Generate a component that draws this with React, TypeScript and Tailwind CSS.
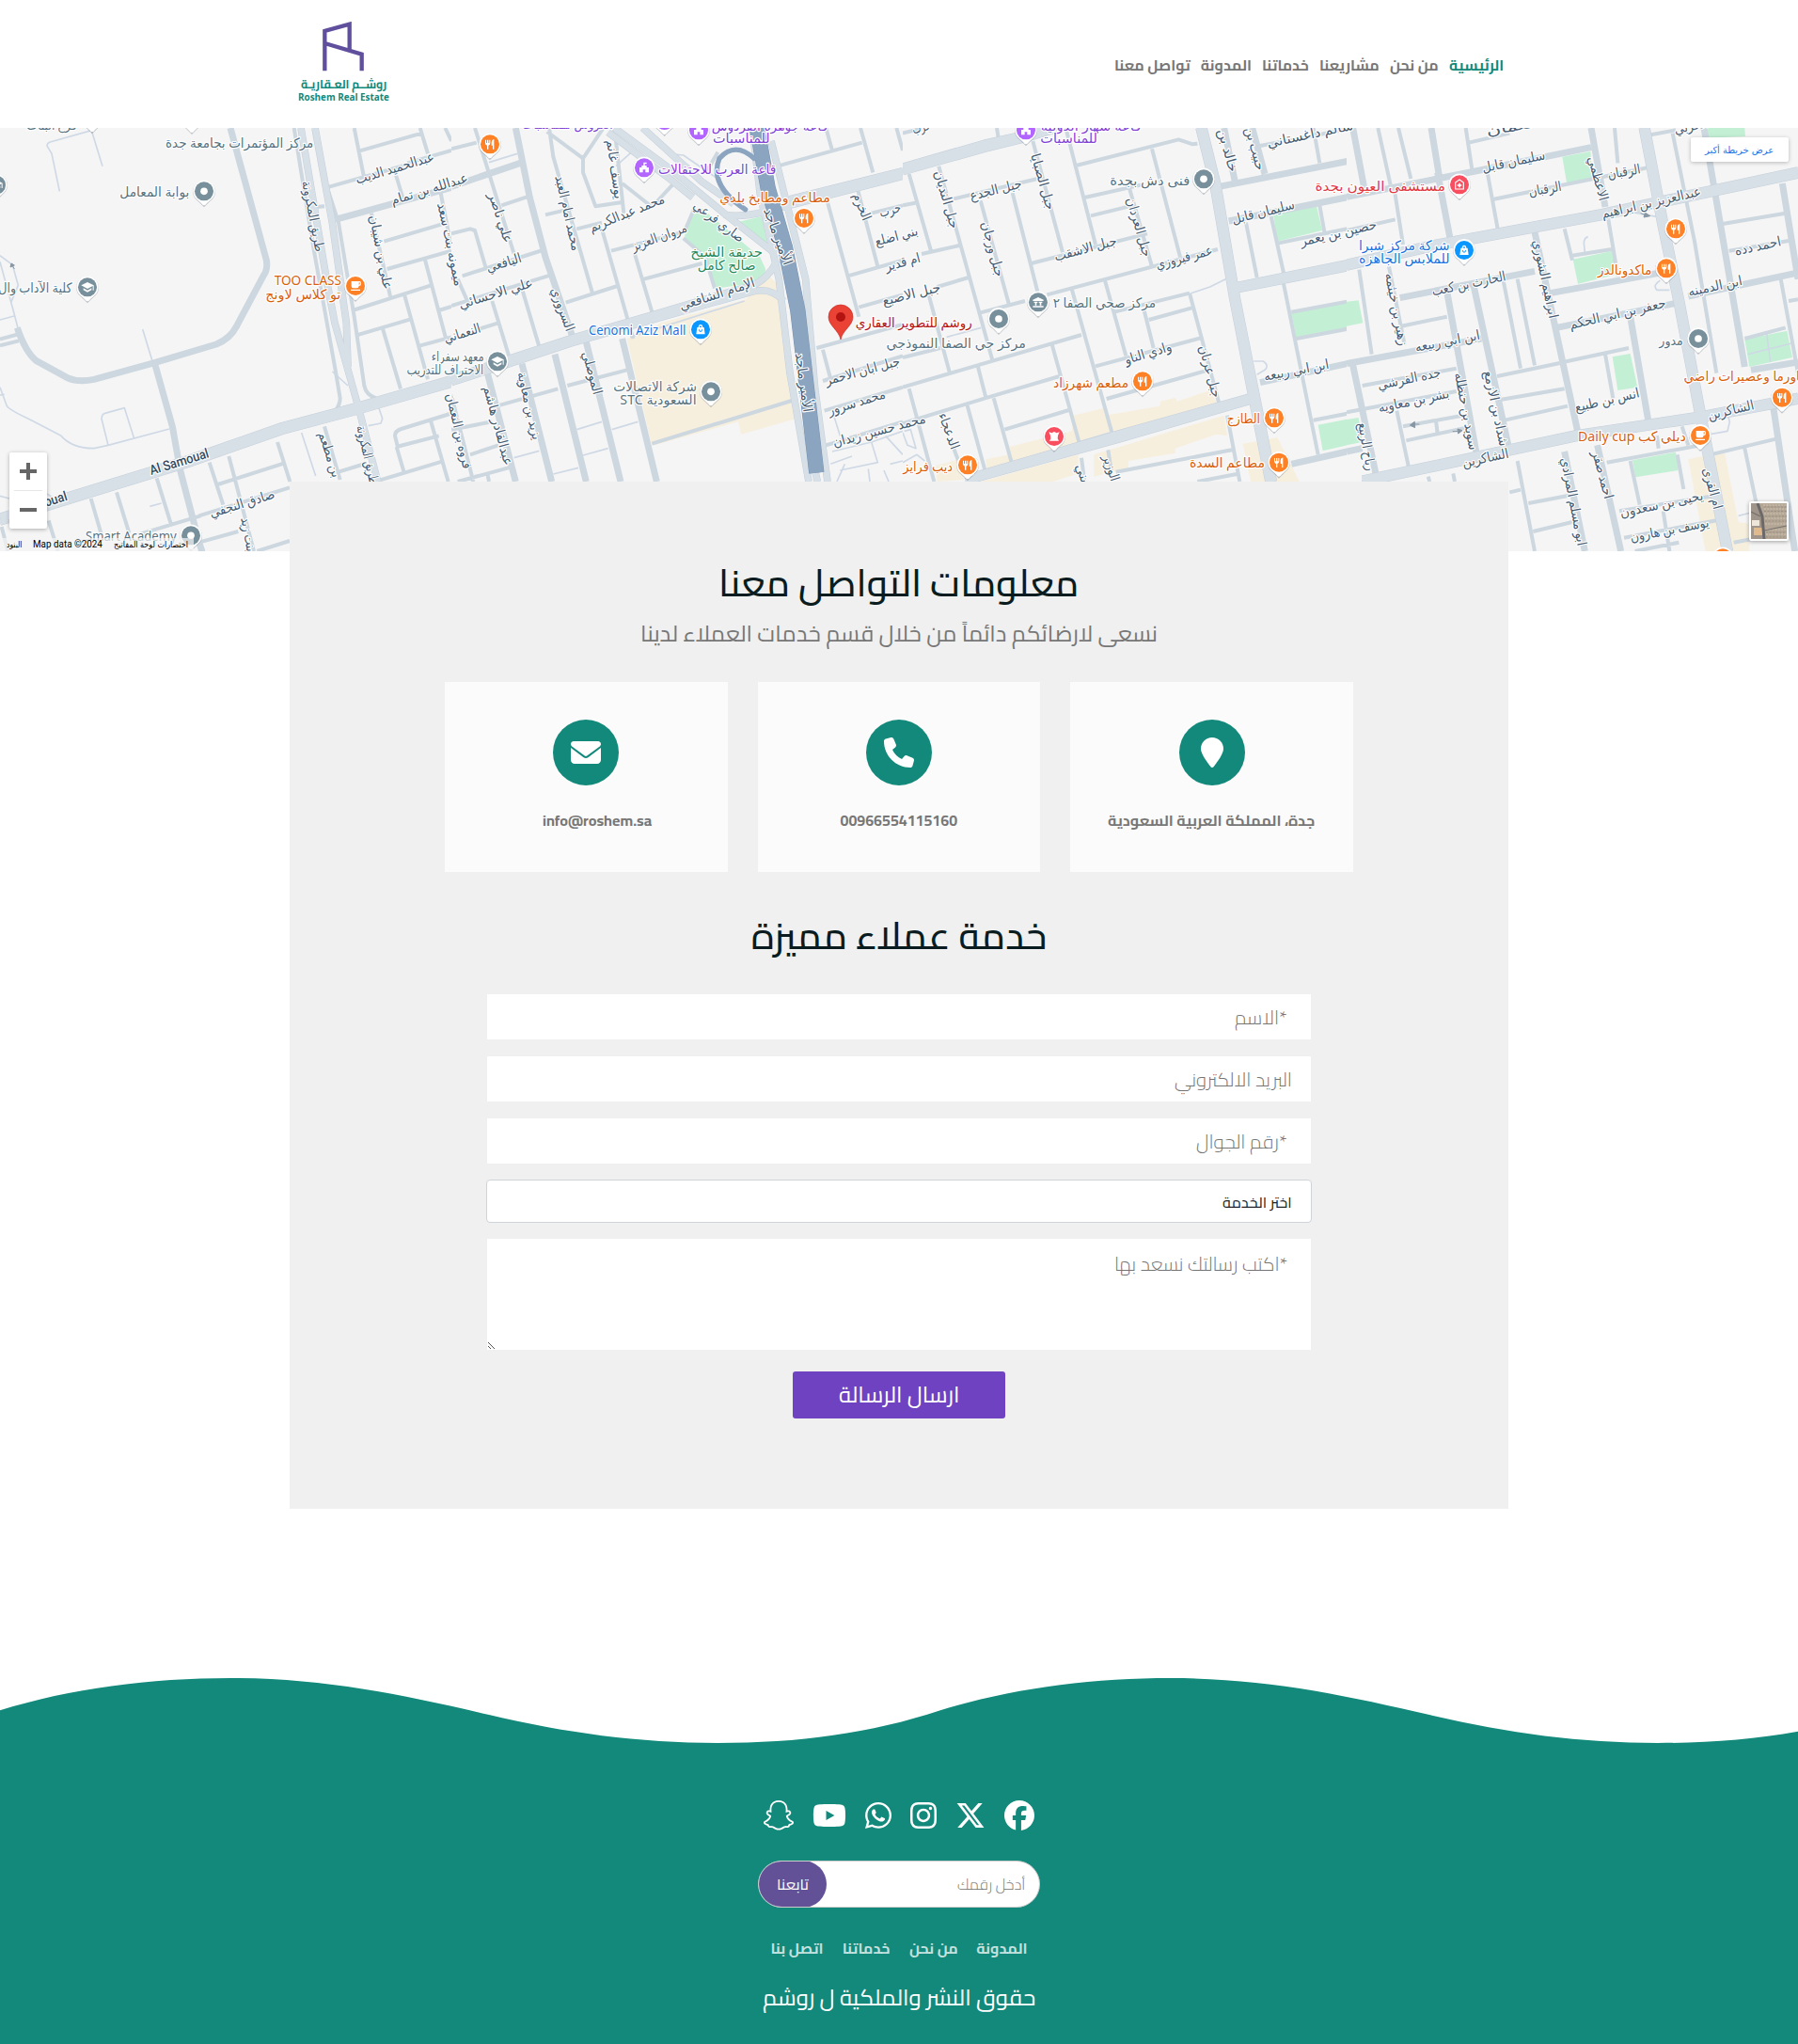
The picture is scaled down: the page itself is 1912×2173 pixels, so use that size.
import { useLayoutEffect, useRef, useState } from "react";
import type { ReactNode } from "react";
import {
  FaEnvelope,
  FaFacebook,
  FaInstagram,
  FaLocationPin,
  FaPhone,
  FaWhatsapp,
  FaXTwitter,
  FaYoutube,
} from "react-icons/fa6";
import { BsSnapchat } from "react-icons/bs";

/* Text that is condensed or widened to fill the width of its box. */
function Fit({ children, className = "", ltr = false }: { children: ReactNode; className?: string; ltr?: boolean }) {
  const box = useRef<HTMLSpanElement>(null);
  const inner = useRef<HTMLSpanElement>(null);
  const [scale, setScale] = useState(1);
  useLayoutEffect(() => {
    if (box.current && inner.current) setScale(box.current.clientWidth / inner.current.offsetWidth);
  }, [children]);
  return (
    <span ref={box} dir={ltr ? "ltr" : "rtl"} className={`flex shrink-0 ${className}`}>
      <span
        ref={inner}
        className={`block shrink-0 whitespace-nowrap ${ltr ? "origin-left" : "origin-right"}`}
        style={{ transform: `scaleX(${scale})` }}
      >
        {children}
      </span>
    </span>
  );
}

/* ---------- Map data: each sheet is drawn at three units per pixel ---------- */
type Label = [text: string, cx: number, cy: number, angle: number, length: number, kind?: string];
type Sheet = {
  x: number;
  beige: string;
  green: string;
  thin: string;
  minor: string;
  medium: string;
  major: string;
  highway?: string;
  ramp?: string;
  arrows?: string;
  labels: Label[];
  pins: [x: number, y: number, kind: string][];
};

const sheets: Sheet[] = [
  {
    x: 0,
    beige: "",
    green: "",
    thin: "M190 220L165 100L150 75Q150 66 160 63L292 26L327 140M0 425L40 455L58 520L35 575M0 445L45 610L58 660M0 630L45 618M455 660L487 765M0 845L22 905Q30 918 100 950L195 1000Q230 1040 300 1040L345 1030L540 978M345 1030L324 945Q325 930 335 928L397 911L427 1006M0 870L14 868M962 990L1007 1128M478 1225L515 1215M1175 968L1215 960L1220 945L1205 900M0 1192L30 1200M150 1185L180 1205M1060 795L1110 840",
    minor:
      "M0 692L55 677M0 712L60 697M938 18L1000 400L1070 790L1085 880Q1085 900 1070 920M1025 150L1080 320L1130 620L1162 840Q1168 870 1200 880M1050 206L1300 135M1130 18L1160 170M1145 92L1345 35M1340 18L1365 100M1420 18L1440 60M1300 130L1440 90M1262 165L1285 240M1185 290L1245 555M1225 380L1410 325M1235 468L1440 410M1125 600L1375 520M1135 680L1310 628M1400 600L1440 588M1355 435L1425 700M1290 550L1365 820M1220 655L1278 850M1330 715L1440 685M1405 220L1440 400M1270 1040L1260 1000Q1260 984 1280 978L1435 930M1265 1035L1400 1000M1265 1035L1290 1120M1200 1145L1410 1082M1375 955L1430 1146M1035 970L1085 1140M1080 1115L1155 1092M1010 270L1035 268M885 1020L925 1146M730 1065L810 1368M668 1085L712 1220M695 1155L905 1088M635 1255L924 1165M500 1135L545 1280M372 1180L412 1310M290 1200L325 1320M155 1270L185 1368M440 1315L640 1255M635 1340L760 1305M820 1368L924 1335M5 1290L25 1368",
    medium:
      "M735 18L850 440Q855 470 840 490L755 650Q735 690 690 708L493 767L300 820Q250 830 215 815L115 760Q80 730 55 655M493 767L550 970L575 1110L635 1340L645 1370M1070 310L1440 208",
    major:
      "M960 18L1045 520L1068 640L1110 790L1145 915L1205 1146M1005 18L1060 320L1105 640L1110 780M0 1275L300 1182L600 1090L900 985L1145 920L1440 835M0 1258L300 1165L600 1073L900 968L1145 903L1440 818",
    arrows: "M46 468L40 458M33 462L36 450L46 456Z",
    labels: [
      ["مركز المؤتمرات بجامعة جدة", 764, 68, 0, 472, "poi"],
      ["فرع البنات", 165, 12, 0, 160, "poi"],
      ["بوابة المعامل", 493, 225, 0, 222, "poi"],
      ["كلية الآداب وال", 112, 530, 0, 235, "poi"],
      ["TOO CLASS", 982, 507, 0, 214, "food"],
      ["تو كلاس لاونج", 967, 552, 0, 240, "food"],
      ["طريق المكرونة", 997, 300, 79, 230],
      ["عبدالحميد الديب", 1260, 148, -17, 260],
      ["عبدالله بن تمام", 1370, 215, -17, 255],
      ["علي بن شيبان", 1213, 415, 79, 240],
      ["طريق المكرونة", 1170, 1060, 77, 190],
      ["بن مطعم", 1050, 1060, 72, 150],
      ["Al Samoual", 572, 1085, -17, 195, "street"],
      ["Al Samoual", 120, 1222, -17, 195, "street"],
      ["صادق النجفي", 773, 1218, -17, 215],
      ["بنت زيد", 790, 1315, 80, 110],
      ["Smart Academy", 418, 1322, 0, 290, "poi"],
    ],
    pins: [
      [294, -14, "dot"],
      [612, -12, "dot"],
      [651, 220, "dot"],
      [-12, 200, "school"],
      [279, 526, "school"],
      [1134, 522, "cup"],
      [609, 1318, "dot"],
    ],
  },
  {
    x: 480,
    beige: "M560 690L670 640L940 565L1012 490L1045 520L1100 945L925 995L915 955L640 1032Z",
    green: "M745 345L770 280L800 275L985 430L1003 470L985 510L845 530L815 440L745 370ZM905 320L990 300L1012 405Z",
    thin: "M400 980L480 955M512 980L595 955M410 1065L500 1040M325 1122L405 1102M200 1070L280 1048M570 685L935 570M1220 935L1240 1000M1215 1050L1340 1020L1360 1085L1240 1110M1210 1090L1278 1065M1255 1090L1230 1146M1330 1105L1335 1146M1385 1000L1440 1060M1340 1020L1440 985M1380 1110L1395 1146M1400 1090L1440 1080M690 100L740 105L850 180M120 128L210 100M525 140L575 95",
    minor:
      "M300 295L385 275M312 18L325 110L450 545M305 30L420 115L485 18M420 115L420 160L460 268L545 255M525 60L550 290M545 195L640 270L705 200M400 340L480 320M480 340L580 690M510 410L740 350M585 420L640 605M615 500L800 450M365 575L530 522M740 370L810 430L840 530M775 275L745 345M75 18L200 420M0 85L80 65M160 265L250 235M0 355L60 340L75 345L110 465M35 490L300 405M0 585L325 485M225 530L280 715M85 660L150 640M20 500L60 590M130 570L185 750M0 980L130 955M145 905L340 850M370 840L560 790M60 1060L150 1030M20 1146L190 1100M0 870L70 1146M640 1025L1095 885M1165 720L1440 645M1185 725L1210 820M1185 825L1440 745M1190 920L1440 845M1195 1030L1440 955M1200 255L1300 620M1265 490L1440 440M1300 590L1440 550M1295 210L1360 460M1040 140L1310 65M1195 18L1215 90M1305 18L1345 160M1420 18L1440 90M1340 290L1440 265M850 95L810 165M115 1120L120 1146",
    medium:
      "M0 205L220 130M205 18L250 240L300 430L390 695M225 770L320 1146M330 740L430 1146M430 700L540 1146M545 690L655 1146M115 800L205 1146",
    major:
      "M0 830L190 768L380 705L640 630L960 540Q1020 525 1060 570M0 815L190 752L380 690L640 615L960 520Q1010 500 1040 440M520 18L700 150L870 290L1035 420M500 32L690 175L770 240M610 18L800 190L900 260M870 295Q920 305 1000 285L1440 172M1080 245L1440 155M960 18L985 230L1045 500L1080 800L1140 1146M1020 60L1070 260L1130 500L1160 850L1200 1146M1160 1110L1168 1146",
    highway: "M975 18L1010 210L1065 400L1105 600L1165 1118",
    ramp: "M965 115Q905 60 855 115Q820 200 938 278",
    labels: [
      ["قاعة جوهرة الفردوس", 1015, 14, 0, 370, "hall"],
      ["للمناسبات", 925, 55, 0, 182, "hall"],
      ["قاعة العرب للاحتفالات", 848, 152, 0, 376, "hall"],
      ["العروس للمناسبات", 370, 8, 0, 290, "hall"],
      ["مطاعم ومطابخ بلدي", 1032, 242, 0, 352, "food"],
      ["صاري فرعي", 852, 318, 37, 190],
      ["حديقة الشيخ", 878, 416, 0, 230, "park"],
      ["صالح كامل", 878, 458, 0, 185, "park"],
      ["الأمير ماجد", 1040, 365, 70, 190],
      ["الأمير ماجد", 1122, 830, 82, 190],
      ["يوسف غانم", 520, 150, 82, 190],
      ["محمد امام العبد", 370, 290, 77, 245],
      ["محمد عبدالكريم", 560, 292, -22, 255],
      ["مروان العزيز", 663, 368, -20, 185],
      ["علي ناصر", 155, 305, 72, 165],
      ["اليافعي", 168, 450, -17, 115],
      ["علي الاحسائي", 142, 548, -17, 245],
      ["ميمونه بنت سعد", -5, 390, 78, 270],
      ["السروري", 353, 597, 70, 145],
      ["الإمام الشافعي", 848, 550, -18, 250],
      ["Cenomi Aziz Mall", 593, 667, 0, 310, "shop"],
      ["النعماني", 35, 675, -17, 120],
      ["معهد سفراء", 20, 750, 0, 168, "poi"],
      ["الاحتراف للتدريب", -20, 792, 0, 245, "poi"],
      ["شركة الاتصالات", 650, 845, 0, 266, "poi"],
      ["السعودية STC", 660, 887, 0, 244, "poi"],
      ["الموصلي", 447, 800, 75, 140],
      ["يزيد بن معاوية", 247, 905, 77, 220],
      ["عبدالقادر هاشم", 147, 968, 75, 260],
      ["فروه بن النعمان", 22, 985, 77, 245],
      ["الخرم", 1308, 270, 68, 90],
      ["حرب", 1400, 282, -15, 70],
      ["بني اضلع", 1420, 365, -15, 140],
      ["ام قدير", 1440, 448, -15, 115],
      ["روشم للتطوير العقاري", 1475, 641, 0, 372, "red"],
      ["جبل ابان الاحمر", 1312, 795, -15, 245],
      ["محمد سرور", 1293, 895, -17, 190],
      ["محمد حسين زيدان", 1365, 985, -15, 305],
    ],
    pins: [
      [123, 70, "food"],
      [680, -6, "hall"],
      [789, 25, "hall"],
      [615, 145, "hall"],
      [1125, 306, "food"],
      [795, 661, "shop"],
      [147, 763, "school"],
      [828, 859, "dot"],
    ],
  },
  {
    x: 960,
    beige:
      "M340 1035L540 985L545 935L640 912L645 935L820 905L822 890L870 878L875 890L980 855L1005 900L350 1095ZM610 1060L1025 935L1035 1000L1000 995L870 1040L870 1055L720 1080L720 1105L670 1115L610 1130ZM105 1095L180 1075L195 1140L110 1146ZM265 1075L340 1060L345 1095L270 1115ZM250 1146L560 1060L560 1120L480 1146ZM1085 1025L1195 1005L1265 1146L1110 1146Z",
    green: "M1182 293L1320 267L1338 345L1195 380ZM1240 610L1440 570L1440 650L1255 685ZM1325 965L1440 943L1440 1025L1340 1048Z",
    thin: "M920 545L980 525L1030 500M1120 762L1150 762Q1170 775 1155 790L1130 805M560 1020L660 990M140 685L250 655M5 985L25 980L42 1040L15 1030L0 990M0 1085L45 1060L70 1080",
    minor:
      "M115 140L285 755M20 165L90 410M0 265L40 257M60 420L180 393M110 525L210 495M160 245L430 180M415 60L510 415M300 18L305 50M520 18L615 390M553 138L880 55L925 70L940 68M580 240L760 200M600 298L735 265M410 450L780 355M720 200L795 460M795 85L885 430M350 225L430 540M248 250L340 585M245 608L390 570M460 550L1005 405M0 845L570 678M0 750L120 720M80 540L150 800M615 778L950 688M540 535L670 1000M645 505L712 745M770 600L800 720M675 605L915 545M785 630L930 590M915 545L1010 900M650 882L965 793M475 705L565 1030M240 780L265 878M290 880L350 1095M0 960L270 878L500 810M325 980L530 918M20 850L100 1146M205 900L265 1120M155 1020L185 1100M655 1045L665 1110M570 1070L580 1146M680 1115L1050 1045M1035 935L1075 1146M940 1146L1065 1122M1215 515L1325 1060M1240 605L1440 568M1255 690L1440 655M1310 950L1440 925M1140 75L1440 18M1310 18L1330 130M1175 300L1215 480M1330 265L1345 350M1200 385L1440 335M1095 320L1130 495M0 35L60 20",
    medium: "M1010 205L1430 122M1115 18L1155 165M1025 18L1060 190M1040 315L1440 235M1140 830L1440 765M1240 1090L1440 1045",
    major:
      "M0 158L260 85L400 50L490 22M0 142L260 67L400 36L440 22M945 18L990 200L1052 560L1112 870L1167 1146M960 18L1005 200L1066 560L1128 870L1183 1146M200 1146L700 1008L1120 885M230 1126L700 990L1120 872M1060 535L1440 460M1060 522L1440 445",
    labels: [
      ["قاعة شهار الدولية", 600, 14, 0, 320, "hall"],
      ["للمناسبات", 530, 55, 0, 182, "hall"],
      ["حرب", 60, 18, -15, 60],
      ["جبل النديان", 138, 247, 74, 190],
      ["جبل الجدع", 297, 217, -14, 170],
      ["جبل الصبايا", 445, 190, 74, 185],
      ["جبل ورجان", 285, 405, 75, 180],
      ["جبل الاشقب", 583, 405, -15, 205],
      ["جبل العردان", 752, 335, 74, 195],
      ["فنى دش بجدة", 788, 188, 0, 255, "poi"],
      ["عمر فيروزي", 898, 433, -15, 185],
      ["جبل الاصبع", 28, 550, -14, 190],
      ["مركز صحي الصفا ٢", 643, 580, 0, 328, "poi"],
      ["مركز حي الصفا النموذجي", 170, 708, 0, 445, "poi"],
      ["وادي الناو", 783, 738, -17, 155],
      ["جبل عرنان", 978, 795, 75, 170],
      ["مطعم شهرزاد", 600, 833, 0, 240, "food"],
      ["الدعجاء", 145, 985, 70, 120],
      ["ديب فرايز", 80, 1100, 0, 158, "food"],
      ["الوزير", 663, 1103, 72, 85],
      ["بني", 572, 1120, 70, 60],
      ["خالد بن", 1035, 90, 75, 140],
      ["حبيب بن", 1122, 85, 75, 140],
      ["سالم داغستاني", 1300, 40, -12, 280],
      ["سليمان قابل", 1150, 288, -14, 205],
      ["حصين بن يعمر", 1390, 355, -13, 250],
      ["ابن ابي ربيعه", 1256, 793, -11, 210],
      ["الطازج", 1087, 948, 0, 106, "food"],
      ["مطاعم السدة", 1035, 1090, 0, 240, "food"],
    ],
    pins: [
      [393, 25, "hall"],
      [960, 181, "dot"],
      [432, 574, "museum"],
      [306, 627, "dot"],
      [765, 826, "food"],
      [483, 1002, "star"],
      [207, 1093, "food"],
      [1185, 943, "food"],
      [1200, 1085, "food"],
    ],
  },
  {
    x: 1432,
    beige: "M1090 1075L1205 1050L1250 1275L1285 1280L1285 1368L1145 1368Z",
    green:
      "M688 110L778 93L785 180L702 193ZM722 437L848 410L860 485L738 515ZM0 572L38 568L52 640L0 650ZM848 748L905 738L928 845L865 855ZM1270 692L1405 665L1422 750L1285 780ZM912 1078L1050 1052L1058 1110L922 1132ZM0 948L38 942L50 1020L0 1030ZM1130 18L1270 18L1272 45L1140 50Z",
    thin: "M760 415L757 385Q758 368 770 365M1000 505Q975 520 990 535L1030 535M1160 995L1215 985L1222 955L1215 930M1280 740L1420 705M1340 675L1352 765M1250 1255L1290 1245M900 285L1010 305",
    minor:
      "M100 18L140 200M165 18L205 180M380 18L400 150M390 65L520 35M450 165L482 340M470 245L700 198L960 145M855 18L865 130M0 345L155 310M150 200L180 390M695 340L720 440M720 425L845 405M835 310L865 490M690 765L900 720M825 740L850 880M135 460L185 710M500 505L555 785M545 500L600 775M480 810L680 768M490 885L695 850M505 950L705 905M175 650L320 620M50 840L350 785M0 925L350 858M160 920L200 1110M180 970L370 935M190 1015L400 970M285 952L290 992M40 470L80 740M1040 35L1110 380L1180 800M1195 325L1400 290M1220 410L1410 378M1385 500L1440 800M1270 690L1400 655M1410 570L1440 565M1160 1060L1370 1010M1270 1040L1310 1230M830 1085L1130 1030M545 1080L600 1368M520 1180L555 1172M580 1215L710 1190M595 1305L720 1275M905 1080L935 1220M1055 1060L1075 1170M870 1240L1180 1190M885 1325L1180 1270M1010 1240L1030 1368M920 1368L1060 1340M1235 1340L1290 1330M990 1000L995 1040M1070 970L1090 1030M970 40L1050 25M260 1130L265 1146M340 1120L345 1146",
    medium:
      "M20 18L60 230M290 160L330 370M270 18L295 170M0 238L440 150L780 80M780 18L825 270M600 350L740 1000M650 545L1000 480M670 655L1060 575M170 560L600 475M905 620L962 950M320 540L415 1060M405 520L520 1050M0 770L430 690M20 775L95 1130M0 1050L50 1040M1140 18L1270 780M1390 195L1440 500M1090 555L1440 480M1290 790L1440 765M1360 900L1430 1368M800 1030L875 1368M695 1050L760 1368",
    major:
      "M0 462L270 402L810 302L1440 168M0 448L270 388L810 288L1440 153M943 18L1003 330L1053 570L1123 940L1208 1368M957 18L1017 330L1067 570L1137 940L1222 1368M50 1152L520 1052L730 1007L1130 947L1440 888M50 1138L520 1038L730 993L1130 933L1440 874",
    arrows: "M232 963H216M217 955L202 966L218 974ZM338 986H354M354 978L369 983L356 993ZM938 290L954 296M952 288L968 299L948 303Z",
    labels: [
      ["مستشفى العيون بجدة", 107, 207, 0, 415, "med"],
      ["نعمان", 520, 18, -10, 150],
      ["سليمان قابل", 533, 127, -12, 205],
      ["الرقبان", 633, 215, -10, 105],
      ["الرقبان", 885, 160, -10, 105],
      ["الاعظمي", 800, 180, 75, 145],
      ["عبدالعزيز بن ابراهيم", 972, 258, -13, 325],
      ["شركة مركز شبرا", 184, 396, 0, 290, "shop"],
      ["للملابس الجاهزه", 184, 438, 0, 290, "shop"],
      ["الحارث بن كعب", 390, 517, -12, 240],
      ["زهير بن خيثمه", 157, 597, 79, 235],
      ["ابراهيم الشوري", 632, 500, 78, 255],
      ["ماكدونالدز", 887, 473, 0, 172, "food"],
      ["احمد دده", 1312, 397, -12, 150],
      ["ابن الدمينه", 1176, 525, -12, 175],
      ["جعفر بن ابي الحكم", 865, 613, -13, 315],
      ["ابن ابي ربيعه", 322, 700, -11, 210],
      ["مدور", 1035, 700, 0, 76, "poi"],
      ["جده القرشي", 200, 820, -12, 205],
      ["بشر بن معاويه", 214, 890, -12, 230],
      ["سويد بن حنظله", 380, 922, 79, 250],
      ["شداد بن الازمع", 475, 913, 78, 245],
      ["شاورما وعصيرات راضي", 1278, 812, 0, 405, "food"],
      ["انس بن طبيع", 831, 888, -13, 210],
      ["الشاكرين", 1226, 920, -13, 150],
      ["الشاكرين", 443, 1073, -12, 150],
      ["رباح الربيع", 62, 1035, 80, 155],
      ["ديلي كب Daily cup", 910, 1006, 0, 344, "food"],
      ["احمد صقر", 815, 1125, 75, 155],
      ["ابو مسلم المرادي", 722, 1210, 79, 285],
      ["ام القرى", 1165, 1168, 75, 135],
      ["يحيى بن سعدون", 1005, 1220, -12, 270],
      ["يوسف بن هارون", 1030, 1302, -11, 255],
      ["الحربي", 1100, 14, -12, 110],
    ],
    pins: [
      [360, 199, "med"],
      [375, 408, "shop"],
      [1050, 340, "food"],
      [1020, 466, "food"],
      [1122, 690, "dot"],
      [1389, 878, "food"],
      [1128, 999, "cup"],
      [1200, 1390, "food"],
    ],
  },
];

const labelFill: Record<string, string> = {
  road: "fill-[#475d74]",
  street: "fill-[#34495e]",
  poi: "fill-[#577382]",
  food: "fill-[#d95f0b]",
  hall: "fill-[#8142d6]",
  park: "fill-[#26895a]",
  shop: "fill-[#1a73e0]",
  med: "fill-[#e23744]",
  red: "fill-[#b51416]",
};

const pinFill: Record<string, string> = {
  dot: "fill-[#78909c]",
  school: "fill-[#78909c]",
  museum: "fill-[#78909c]",
  food: "fill-[#ff8126]",
  cup: "fill-[#ff8126]",
  hall: "fill-[#b266ff]",
  shop: "fill-[#0a97ff]",
  med: "fill-[#f84e5f]",
  star: "fill-[#f84e5f]",
};

function PinGlyph({ kind }: { kind: string }) {
  switch (kind) {
    case "dot":
      return <circle r="11.5" fill="#fff" />;
    case "food":
      return (
        <path
          d="M-15 -14V-4Q-15 3 -9 4V16H-5V4Q1 3 1 -4V-14H-2V-4H-5V-14H-9V-4H-12V-14ZM13 -16Q5 -14 5 -4V4H9V16H13Z"
          fill="#fff"
        />
      );
    case "cup":
      return (
        <path
          d="M-13 -15H13Q18 -15 18 -10V-6Q18 0 11 0V1Q10 7 4 7H-7Q-13 7 -13 0ZM11 -11V-4Q14 -4 14 -7V-11ZM-15 11H15V15H-15Z"
          fill="#fff"
          fillRule="evenodd"
        />
      );
    case "school":
      return <path d="M0 -16L20 -6V10H17V-4L0 5L-20 -6ZM-13 3L0 10L13 3V9L0 16L-13 9Z" fill="#fff" />;
    case "museum":
      return (
        <path
          d="M0 -16L17 -8V-4H-17V-8ZM-13 -2H-2V2H-5V10H-10V2H-13ZM2 -2H13V2H10V10H5V2H2ZM-17 12H17V16H-17Z"
          fill="#fff"
        />
      );
    case "hall":
      return <path d="M-2 -17H8V-12H2V-7H8V-1H15V15H4V6H-4V15H-15V-1H-8V-7H-2Z" fill="#fff" />;
    case "shop":
      return (
        <path
          d="M-7 -7Q-7 -16 0 -16Q7 -16 7 -7H11L14 15H-14L-11 -7ZM-3 -7H3Q3 -12 0 -12Q-3 -12 -3 -7ZM-6 0Q-6 8 0 8Q6 8 6 0H3Q3 5 0 5Q-3 5 -3 0Z"
          fill="#fff"
          fillRule="evenodd"
        />
      );
    case "med":
      return (
        <g stroke="#fff" fill="none">
          <path d="M-13 14V-7L0 -16L13 -7V14Z" strokeWidth="3.5" />
          <path d="M-7 2H7M0 -5V9" strokeWidth="5" />
        </g>
      );
    default:
      return <path d="M-17 -14L-8 -11L0 -15L8 -11L17 -14L12 -3L11 7L15 14H-15L-11 7L-12 -3Z" fill="#fff" />;
  }
}

function Pin({ x, y, kind }: { x: number; y: number; kind: string }) {
  return (
    <g transform={`translate(${x} ${y})`}>
      <path d="M0 48L-20 28A36 36 0 1 1 20 28Z" fill="#63707a" opacity="0.35" transform="translate(0 3)" />
      <path d="M0 45Q-5 45 -9 38L-20 28A35 35 0 1 1 20 28L9 38Q5 45 0 45Z" fill="#fff" />
      <circle r="30" className={pinFill[kind]} />
      <PinGlyph kind={kind} />
    </g>
  );
}

function MapCanvas() {
  return (
    <svg className="block h-[450px] w-[1912px]" viewBox="0 136 1912 450" role="img" aria-label="خريطة">
      <rect y="136" width="1912" height="450" fill="#f5f5f5" />
      {sheets.map((s, i) => (
        <svg key={s.x} x={s.x} y="130" width={i === 2 ? 472 : 480} height="460" viewBox={i === 2 ? "0 0 1416 1380" : "0 0 1440 1380"} fill="none" strokeLinejoin="round">
          <path d={s.beige} fill="#f7efde" />
          <path d={s.green} fill="#c3f0d4" />
          <path d={s.thin} stroke="#cfd9e5" strokeWidth="5" />
          <path d={s.minor} stroke="#ccd7df" strokeWidth="12" />
          <path d={s.medium} stroke="#ccd7df" strokeWidth="21" />
          <path d={s.major} stroke="#c5d0da" strokeWidth="23" />
          <path d={s.major} stroke="#d7dfe7" strokeWidth="20" />
          {s.arrows && <path d={s.arrows} fill="#8796a3" stroke="#8796a3" strokeWidth="3" />}
          {s.highway && (
            <>
              <path d={s.highway} stroke="#7893b2" strokeWidth="49" />
              <path d={s.highway} stroke="#8ba4c0" strokeWidth="46" />
              <path d={s.ramp} stroke="#8ba4c0" strokeWidth="16" strokeLinecap="round" />
            </>
          )}
        </svg>
      ))}
      {sheets.map((s) => (
        <g key={s.x} transform={`translate(${s.x} 130) scale(0.333333)`}>
          {s.labels.map(([text, cx, cy, angle, length, kind = "road"], i) => (
            <text
              key={i}
              x="0"
              y="0"
              dy="12"
              transform={`translate(${cx} ${cy}) rotate(${angle})`}
              textAnchor="middle"
              textLength={length}
              lengthAdjust="spacingAndGlyphs"
              className={`stroke-white text-[43px] [paint-order:stroke] ${kind === "street" ? "font-['Roboto',sans-serif] font-medium" : "font-['Noto_Sans','DejaVu_Sans',sans-serif]"} ${labelFill[kind]}`}
              strokeWidth="7"
              strokeLinejoin="round"
            >
              {text}
            </text>
          ))}
          {s.pins.map(([x, y, kind], i) => (
            <Pin key={i} x={x} y={y} kind={kind} />
          ))}
        </g>
      ))}
      <g transform="translate(894 361)">
        <path d="M0 0C-2 -10 -13 -15 -13 -24A13 13 0 0 1 13 -24C13 -15 2 -10 0 0Z" fill="#ea4335" stroke="#c5221f" strokeWidth="0.6" />
        <circle cy="-24" r="5" fill="#b31412" />
      </g>
    </svg>
  );
}

function SatelliteThumb() {
  return (
    <svg className="size-full" viewBox="0 0 38 38">
      <rect width="38" height="38" fill="#b3a695" />
      <path d="M0 0H9L14 38H0Z" fill="#a0958a" />
      <path d="M13 2H38M14 6H38M14 11H38M15 16H38M15 22H38M16 28H38M16 33H38" stroke="#c2b5a3" strokeWidth="2" strokeDasharray="2 1.2" />
      <path d="M14 4H38M14 8.5H38M15 14H38M15 19H38M16 31H38M16 36H38" stroke="#998e82" strokeWidth="1.2" strokeDasharray="2 1.6" />
      <path d="M1 18H9V24H1Z" fill="#eee6d8" />
      <path d="M3 26H12V34H3Z" fill="#e0b98c" />
      <path d="M7 0L12 14L14 38" stroke="#6b6869" strokeWidth="3" fill="none" />
      <path d="M0 9L10 14M14 29L38 24" stroke="#77706c" strokeWidth="1.2" fill="none" />
    </svg>
  );
}

function MapSection() {
  return (
    <section className="relative h-[450px] overflow-hidden">
      <MapCanvas />
      <a className="absolute left-[1798px] top-[10px] flex h-[26px] w-[104px] items-center justify-center rounded-xs bg-white font-['DejaVu_Sans',sans-serif] text-[10px] text-[#1a73e8] shadow-[0_1px_4px_rgba(0,0,0,0.25)]">
        <Fit className="w-[73px]">عرض خريطة أكبر</Fit>
      </a>
      <div className="absolute left-[10px] top-[345px] flex h-[81px] w-[40px] flex-col items-center rounded-xs bg-white shadow-[0_1px_4px_rgba(0,0,0,0.3)]">
        <svg viewBox="0 0 40 81" className="h-full w-full" stroke="#666" strokeWidth="4">
          <path d="M11 20H29M20 11V29" />
          <path d="M11 61H29" />
          <path d="M5 40.5H35" stroke="#e6e6e6" strokeWidth="1" />
        </svg>
      </div>
      <div className="absolute left-[1860px] top-[397px] size-[42px] rounded-xs border-2 border-white bg-white shadow-[0_1px_4px_rgba(0,0,0,0.35)]">
        <SatelliteThumb />
      </div>
      <div dir="ltr" className="absolute bottom-0 left-0 flex h-[14px] w-[206px] items-center bg-[#f5f5f5]/70 pl-[7px] font-['DejaVu_Sans',sans-serif] text-[9px] leading-none text-black">
        <Fit className="mr-3 w-[16px]">البنود</Fit>
        <Fit ltr className="mr-3 w-[74px] font-['Roboto',sans-serif] text-[10px]">Map data ©2024</Fit>
        <Fit className="w-[79px]">اختصارات لوحة المفاتيح</Fit>
      </div>
    </section>
  );
}

function Header() {
  return (
    <header className="mx-auto flex h-[136px] w-[1320px] items-center justify-between pl-[21px] pr-[17px]">
      <nav className="flex gap-[11px] pt-px text-[16px] font-bold leading-6 text-[#777]">
        <Fit className="w-[58px] text-[#12897b]">الرئيسية</Fit>
        <Fit className="w-[52px]">من نحن</Fit>
        <Fit className="w-[64px]">مشاريعنا</Fit>
        <Fit className="w-[50px]">خدماتنا</Fit>
        <Fit className="w-[54px]">المدونة</Fit>
        <Fit className="w-[81px]">تواصل معنا</Fit>
      </nav>
      <div className="flex h-full w-[97px] flex-col items-center pt-[23px] text-[#12897b]">
        <svg className="h-[53px] w-[46px] -translate-x-px" viewBox="0 0 138 159" fill="none" stroke="#5f4f9c" strokeWidth="13">
          <path d="M12 157V30L91 8V93M12 69L130 104V157" transform="translate(-2 0)" />
        </svg>
        <Fit className="mt-[6px] w-[91px] text-[13px] font-bold leading-[14px]">روشــم العـقاريـة</Fit>
        <Fit ltr className="w-[97px] font-['Open_Sans',sans-serif] text-[11px] font-bold leading-[14px]">
          Roshem Real Estate
        </Fit>
      </div>
    </header>
  );
}

function ContactCard({ icon, children }: { icon: ReactNode; children: ReactNode }) {
  return (
    <div className="flex h-[202px] flex-1 flex-col items-center bg-[#fbfbfb] pt-10 text-[16px] font-bold leading-6 text-[#777]">
      <div className="mb-[25px] flex size-[70px] items-center justify-center rounded-full bg-[#12897b] text-white">{icon}</div>
      {children}
    </div>
  );
}

function Field({ children }: { children: ReactNode }) {
  return (
    <label className="mb-[18px] flex h-12 items-center bg-white px-5 pt-[2px] text-[20px] font-light leading-7 text-[#757575]">
      {children}
      <input className="min-w-0 flex-1 bg-transparent outline-none" />
    </label>
  );
}

function ContactPanel() {
  return (
    <main className="relative mx-auto -mt-[74px] flex h-[1092px] w-[1296px] flex-col items-center bg-[#f0f0f0] pt-[80px]">
      <h1 className="flex text-[40px] font-medium leading-[56px] text-[#0b1c20]">
        <Fit className="w-[383px]">معلومات التواصل معنا</Fit>
      </h1>
      <p className="mt-[8px] flex text-[24px] leading-9 text-[#777]">
        <Fit className="w-[550px]">نسعى لارضائكم دائماً من خلال قسم خدمات العملاء لدينا</Fit>
      </p>
      <div className="mt-[33px] flex w-[966px] gap-8">
        <ContactCard icon={<FaLocationPin className="h-8 w-6" />}>
          <Fit className="w-[220px]">جدة، المملكة العربية السعودية</Fit>
        </ContactCard>
        <ContactCard icon={<FaPhone className="size-8" />}>
          <Fit ltr className="w-[125px]">00966554115160</Fit>
        </ContactCard>
        <ContactCard icon={<FaEnvelope className="size-8" />}>
          <Fit ltr className="ml-6 w-[116px]">info@roshem.sa</Fit>
        </ContactCard>
      </div>
      <h2 className="mt-[40px] flex text-[40px] font-medium leading-[56px] text-[#0b1c20]">
        <Fit className="w-[314px]">خدمة عملاء مميزة</Fit>
      </h2>
      <form className="mt-[34px] flex w-[876px] flex-col">
        <Field>
          <Fit className="mr-[5px] w-[56px]">*الاسم</Fit>
        </Field>
        <Field>
          <Fit className="w-[125px]">البريد الالكتروني</Fit>
        </Field>
        <Field>
          <Fit className="mr-[5px] w-[97px]">*رقم الجوال</Fit>
        </Field>
        <button type="button" className="-mx-px -mt-px mb-[17px] flex h-[46px] items-center rounded-[4px] border border-[#ced4da] bg-white px-5 pt-[2px] text-[16px] leading-6 text-[#212529]">
          <Fit className="w-[74px]">اختر الخدمة</Fit>
        </button>
        <label className="relative flex h-[118px] bg-white px-5 pt-[13px] text-[20px] font-light leading-7 text-[#757575]">
          <Fit className="mr-[5px] h-7 w-[184px]">*اكتب رسالتك نسعد بها</Fit>
          <svg className="absolute bottom-0 left-0 size-[9px]" viewBox="0 0 9 9" stroke="#555" strokeWidth="1">
            <path d="M1 1L8 8M1 5L4 8" />
          </svg>
        </label>
        <button type="button" className="mx-auto mt-[23px] flex h-[50px] w-[226px] items-center justify-center rounded-[3px] bg-[#6f42c1] text-[24px] leading-9 text-white">
          <Fit className="w-[129px]">ارسال الرسالة</Fit>
        </button>
      </form>
    </main>
  );
}

function Wave() {
  const crest = "C75 35 160 24 245 24C345 24 430 42 520 63C600 82 680 93 763 93C850 93 925 83 1000 58.3";
  return (
    <svg className="block h-[100px] w-full" viewBox="0 0 1912 100" fill="#12897b">
      <path d={`M0 58.3${crest}V100H0Z`} />
      <path d={`M0 58.3${crest}V100H0Z`} transform="translate(1000 0)" />
      <path d="M995 62H1005V100H995Z" />
    </svg>
  );
}

function Footer() {
  return (
    <footer className="mt-[156px]">
      <Wave />
      <div className="flex h-[313px] flex-col items-center bg-[#12897b] pt-[54px] text-white">
        <div className="flex gap-5">
          <FaFacebook className="h-8 w-8" />
          <FaXTwitter className="h-8 w-8" />
          <FaInstagram className="h-8 w-7" />
          <FaWhatsapp className="h-8 w-7" />
          <FaYoutube className="h-8 w-9" />
          <BsSnapchat className="h-8 w-8" />
        </div>
        <div className="mt-[32px] flex h-[50px] w-[300px] items-center justify-between overflow-hidden rounded-full border border-[#ccc] bg-white pr-[15px] text-[16px] font-light leading-6 text-[#757575]">
          <Fit className="w-[72px]">أدخل رقمك</Fit>
          <button type="button" className="-my-px -ml-px flex h-[50px] w-[73px] items-center justify-center rounded-full bg-[#635197] text-[16px] font-normal text-white">
            <Fit className="w-[34px]">تابعنا</Fit>
          </button>
        </div>
        <nav className="mt-[31px] flex gap-5 text-[16px] font-bold leading-6 text-white/75">
          <Fit className="w-[54px]">المدونة</Fit>
          <Fit className="w-[52px]">من نحن</Fit>
          <Fit className="w-[51px]">خدماتنا</Fit>
          <Fit className="w-[56px]">اتصل بنا</Fit>
        </nav>
        <p className="mt-[23px] flex text-[24px] leading-9">
          <Fit className="w-[290px]">حقوق النشر والملكية ل روشم</Fit>
        </p>
      </div>
    </footer>
  );
}

export default function App() {
  return (
    <div dir="rtl" className="w-[1912px] overflow-hidden bg-white font-['Cairo','DejaVu_Sans',sans-serif]">
      <Header />
      <MapSection />
      <ContactPanel />
      <Footer />
    </div>
  );
}
